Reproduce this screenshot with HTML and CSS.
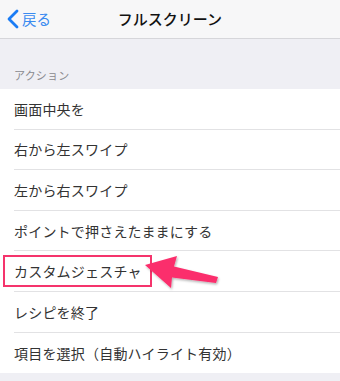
FILE: index.html
```html
<!DOCTYPE html>
<html lang="ja">
<head>
<meta charset="utf-8">
<link rel="stylesheet" href="styles.css">
</head>
<body>
<div class="screen">
  <header class="nav">
    <div class="back">
      <svg class="chev" width="13" height="20" viewBox="0 0 13 20"><path d="M11 2 L3 10 L11 18" fill="none" stroke="#1a7cf5" stroke-width="2.8" stroke-linecap="round" stroke-linejoin="round"/></svg>
      <span class="back-label">戻る</span>
    </div>
    <div class="title">フルスクリーン</div>
  </header>
  <div class="section-header">アクション</div>
  <ul class="list">
    <li class="row"><span>画面中央を</span></li>
    <li class="row"><span>右から左スワイプ</span></li>
    <li class="row"><span>左から右スワイプ</span></li>
    <li class="row"><span>ポイントで押さえたままにする</span></li>
    <li class="row"><span>カスタムジェスチャ</span></li>
    <li class="row"><span>レシピを終了</span></li>
    <li class="row"><span>項目を選択（自動ハイライト有効）</span></li>
  </ul>
  <div class="highlight"></div>
  <svg class="arrow" width="340" height="381" viewBox="0 0 340 381">
    <defs>
      <filter id="sh" x="-20%" y="-40%" width="140%" height="180%">
        <feDropShadow dx="1" dy="1.5" stdDeviation="1.2" flood-color="#000" flood-opacity="0.3"/>
      </filter>
    </defs>
    <polygon points="145,265 177,256 174,266.5 218,277 216,283 172,277.5 171,288" fill="#fb2e6c" filter="url(#sh)"/>
  </svg>
</div>
</body>
</html>
```
FILE: styles.css
```css
* { box-sizing: border-box; }
html, body { margin: 0; padding: 0; }
body {
  width: 340px;
  height: 381px;
  overflow: hidden;
  background: #efeff4;
  font-family: "Noto Sans CJK JP", "Noto Sans", sans-serif;
}
.screen {
  position: relative;
  width: 340px;
  height: 381px;
}
.nav {
  height: 39px;
  background: #f7f7f8;
  border-bottom: 1px solid #d6d6da;
  display: flex;
  align-items: center;
  position: relative;
}
.back {
  display: flex;
  align-items: center;
  padding-left: 6px;
  gap: 3px;
  color: #3a8bf0;
  font-size: 14.5px;
}
.chev { display: block; }
.back-label { line-height: 20px; }
.title {
  position: absolute;
  left: 0;
  right: 0;
  top: 0;
  height: 38px;
  line-height: 37px;
  text-align: center;
  font-size: 15px;
  font-weight: 500;
  color: #111;
  pointer-events: none;
}
.section-header {
  height: 50px;
  padding: 0 14px;
  display: flex;
  align-items: flex-end;
  padding-bottom: 6px;
  font-size: 11px;
  color: #8a8a8f;
  letter-spacing: 0.2px;
}
.list {
  list-style: none;
  margin: 0;
  padding: 0 0 0 14px;
  background: #fff;
}
.row {
  height: 40.6px;
  display: flex;
  align-items: center;
  font-size: 14px;
  letter-spacing: 0.2px;
  color: #333;
  border-bottom: 1px solid #e2e2e4;
}
.row:last-child { border-bottom: none; }
.highlight {
  position: absolute;
  left: 3px;
  top: 255px;
  width: 149px;
  height: 32px;
  border: 2px solid #f5346c;
}
.arrow {
  position: absolute;
  left: 0;
  top: 0;
}
```
